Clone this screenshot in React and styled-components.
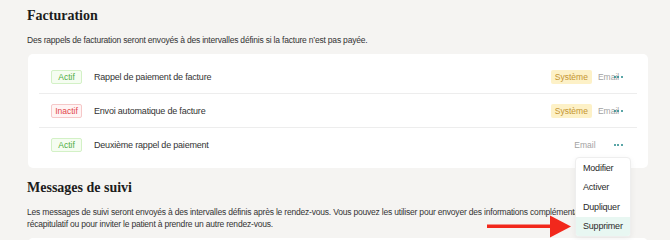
import React from "react";
import styled, { createGlobalStyle } from "styled-components";

const GlobalStyle = createGlobalStyle`
  html, body {
    margin: 0;
    padding: 0;
    background: #f5f4f2;
  }
  body {
    font-family: "Liberation Sans", Arial, sans-serif;
    color: #303030;
    -webkit-font-smoothing: antialiased;
  }
`;

const Page = styled.div`
  position: relative;
  width: 670px;
  height: 240px;
  overflow: hidden;
  box-sizing: border-box;
  padding: 7px 22px 0 27px;
`;

const Section = styled.section`
  & + & {
    margin-top: 11px;
  }
`;

const Title = styled.h2`
  margin: 0 0 9px;
  font-family: "Liberation Serif", "DejaVu Serif", serif;
  font-weight: 700;
  font-size: 14px;
  line-height: 18px;
  color: #1c1c1c;
`;

const Description = styled.p`
  margin: 0;
  font-size: 8.5px;
  line-height: 12px;
  letter-spacing: -0.2px;
  color: #333;
  white-space: nowrap;
`;

const Card = styled.div`
  margin: 8px 0 0 1px;
  background: #fff;
  border-radius: 5px;
  padding: 6px 11px;
  min-height: ${(p) => (p.$stub ? "40px" : "0")};
`;

const Row = styled.div`
  display: flex;
  align-items: center;
  height: 34px;
  box-sizing: border-box;
  padding: 0 9px 0 12px;
  border-bottom: 1px solid #ededed;
  &:last-child {
    border-bottom: none;
  }
`;

const Status = styled.span`
  flex-shrink: 0;
  width: 31px;
  height: 14px;
  box-sizing: border-box;
  display: flex;
  align-items: center;
  justify-content: center;
  border-radius: 2px;
  font-size: 8.5px;
  border: 1px solid ${(p) => (p.$active ? "#d3f1c6" : "#f6c8c8")};
  background: ${(p) => (p.$active ? "#f5fdf1" : "#fff4f4")};
  color: ${(p) => (p.$active ? "#4fae43" : "#e2474a")};
`;

const Name = styled.span`
  flex: 1;
  margin-left: 12px;
  font-size: 9px;
  letter-spacing: -0.2px;
  color: #333;
`;

const Tags = styled.div`
  width: 36px;
  margin-right: 5px;
  display: flex;
  align-items: center;
  justify-content: center;
  gap: 6px;
  white-space: nowrap;
`;

const SystemTag = styled.span`
  height: 14px;
  padding: 0 4px;
  display: flex;
  align-items: center;
  background: #fdf1c7;
  color: #c4942f;
  font-size: 8.5px;
  border-radius: 2px;
`;

const Channel = styled.span`
  font-size: 8.5px;
  color: #a2a2a2;
`;

const MenuAnchor = styled.div`
  position: relative;
`;

const DotsButton = styled.button`
  width: 20px;
  height: 14px;
  padding: 0;
  border: none;
  background: transparent;
  display: flex;
  align-items: center;
  justify-content: center;
  gap: 1.5px;
  cursor: pointer;
  span {
    width: 2px;
    height: 2px;
    border-radius: 50%;
    background: #23898a;
  }
`;

const Menu = styled.div`
  position: absolute;
  top: calc(100% + 5px);
  right: -3px;
  width: 54px;
  background: #fff;
  border: 1px solid #eeeeee;
  border-radius: 4px;
  box-shadow: 0 2px 6px rgba(0, 0, 0, 0.06);
  overflow: hidden;
  z-index: 2;
`;

const MenuItem = styled.div`
  height: 19.5px;
  display: flex;
  align-items: center;
  padding: 0 7px;
  font-size: 9px;
  letter-spacing: -0.2px;
  color: #2a2a2a;
  background: ${(p) => (p.$highlight ? "#e8f7f2" : "transparent")};
`;

const Arrow = styled.svg`
  position: absolute;
  left: 487px;
  top: 214px;
  z-index: 3;
`;

const reminders = [
  { active: true, name: "Rappel de paiement de facture", system: true },
  { active: false, name: "Envoi automatique de facture", system: true },
  { active: true, name: "Deuxième rappel de paiement", system: false, open: true },
];

const Dots = () => (
  <DotsButton aria-label="Options">
    <span />
    <span />
    <span />
  </DotsButton>
);

export default function App() {
  return (
    <>
      <GlobalStyle />
      <Page>
        <Section>
          <Title>Facturation</Title>
          <Description>
            Des rappels de facturation seront envoyés à des intervalles définis si la facture n’est pas payée.
          </Description>
          <Card>
            {reminders.map((r) => (
              <Row key={r.name}>
                <Status $active={r.active}>{r.active ? "Actif" : "Inactif"}</Status>
                <Name>{r.name}</Name>
                <Tags>
                  {r.system && <SystemTag>Système</SystemTag>}
                  <Channel>Email</Channel>
                </Tags>
                <MenuAnchor>
                  <Dots />
                  {r.open && (
                    <Menu>
                      <MenuItem>Modifier</MenuItem>
                      <MenuItem>Activer</MenuItem>
                      <MenuItem>Dupliquer</MenuItem>
                      <MenuItem $highlight>Supprimer</MenuItem>
                    </Menu>
                  )}
                </MenuAnchor>
              </Row>
            ))}
          </Card>
        </Section>
        <Section>
          <Title>Messages de suivi</Title>
          <Description>
            Les messages de suivi seront envoyés à des intervalles définis après le rendez-vous. Vous pouvez les utiliser pour envoyer des informations complémentaires, un
            <br />
            récapitulatif ou pour inviter le patient à prendre un autre rendez-vous.
          </Description>
          <Card $stub />
        </Section>
        <Arrow width="84" height="25" viewBox="0 0 84 25">
          <rect x="0" y="10.5" width="64" height="3.5" fill="#f2281c" />
          <polygon points="63,1.5 84,12.5 63,23.5" fill="#f2281c" />
        </Arrow>
      </Page>
    </>
  );
}
